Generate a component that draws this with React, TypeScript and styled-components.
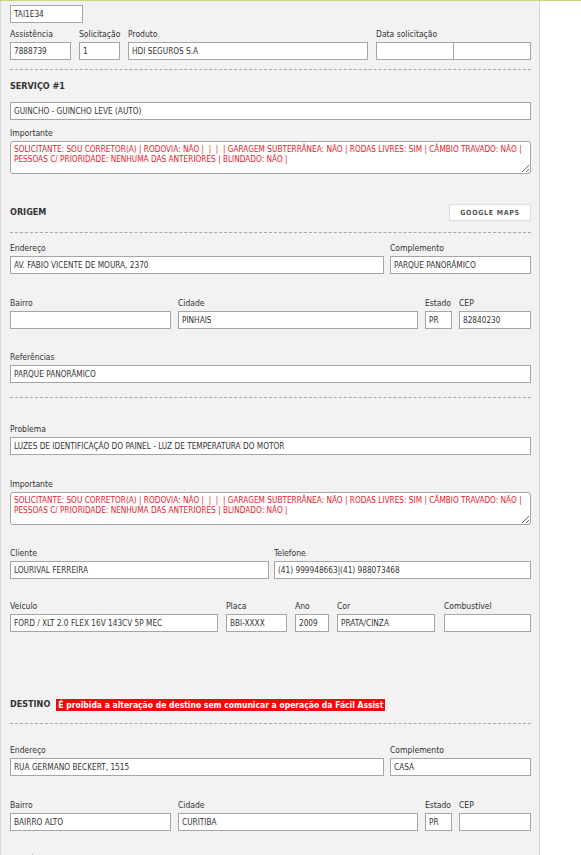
import React from 'react';
import styled, { createGlobalStyle } from 'styled-components';

const GlobalStyle = createGlobalStyle`
	html, body {
		margin: 0;
		padding: 0;
		background: #ffffff;
	}
	body {
		font-family: "DejaVu Sans Condensed", "DejaVu Sans", Verdana, sans-serif;
		color: #333333;
	}
`;

const Page = styled.div`
	border-top: 1px solid #d2d27a;
	min-height: 854px;
`;

const Panel = styled.div`
	width: 540px;
	min-height: 854px;
	box-sizing: border-box;
	background: #f2f2f2;
	border-left: 1px solid #d9d9d9;
	border-right: 1px solid #d9d9d9;
	padding: 0 8px 0 9px;
	display: flex;
	flex-direction: column;
`;

const Row = styled.div<{ $mt: number; $gap?: number }>`
	display: flex;
	align-items: flex-end;
	gap: ${(p) => p.$gap ?? 0}px;
	margin-top: ${(p) => p.$mt}px;
`;

const Field = styled.div<{ $w?: number; $ml?: number }>`
	display: flex;
	flex-direction: column;
	width: ${(p) => (p.$w ? `${p.$w}px` : 'auto')};
	flex: ${(p) => (p.$w ? '0 0 auto' : '1 1 auto')};
	margin-left: ${(p) => p.$ml ?? 0}px;
	min-width: 0;
`;

const Label = styled.label`
	font-size: 8.5px;
	line-height: 15px;
	height: 15px;
	white-space: nowrap;
	color: #333333;
`;

const Input = styled.input`
	height: 18px;
	width: 100%;
	box-sizing: border-box;
	margin: 0;
	border: 1px solid #a5a5a5;
	border-radius: 0;
	background: #ffffff;
	padding: 0 3px;
	font-family: inherit;
	font-size: 8.2px;
	color: #333333;
	outline: none;
`;

const TextArea = styled.textarea`
	height: 33px;
	width: 100%;
	box-sizing: border-box;
	margin: 0;
	border: 1px solid #a5a5a5;
	border-radius: 3px;
	background: #ffffff;
	padding: 2px 3px;
	font-family: inherit;
	font-size: 8.2px;
	line-height: 10px;
	color: #e8202c;
	outline: none;
	resize: vertical;
	display: block;
`;

const Divider = styled.div<{ $mt: number }>`
	margin-top: ${(p) => p.$mt}px;
	border-top: 1px dashed #a8a8a8;
	height: 0;
`;

const SectionHead = styled.div<{ $mt: number }>`
	display: flex;
	align-items: center;
	justify-content: space-between;
	margin-top: ${(p) => p.$mt}px;
	min-height: 13px;
`;

const Title = styled.div`
	display: flex;
	align-items: center;
	gap: 6px;
	font-size: 9px;
	font-weight: bold;
	line-height: 13px;
	color: #333333;
`;

const Warning = styled.span`
	background: #ee0a0a;
	color: #ffffff;
	font-weight: bold;
	font-size: 8.5px;
	line-height: 12px;
	padding: 0 2px;
`;

const MapsButton = styled.button`
	width: 82px;
	height: 17px;
	box-sizing: border-box;
	border: 1px solid #dcdcdc;
	background: #ffffff;
	font-family: inherit;
	font-size: 7px;
	font-weight: bold;
	letter-spacing: 0.7px;
	color: #555555;
	padding: 0;
	cursor: pointer;
`;

const DateInputs = styled.div`
	display: flex;
	> input + input {
		margin-left: -1px;
	}
`;

const importante =
	'SOLICITANTE: SOU CORRETOR(A) | RODOVIA: NÃO |  |  |  | GARAGEM SUBTERRÂNEA: NÃO | RODAS LIVRES: SIM | CÂMBIO TRAVADO: NÃO | PESSOAS C/ PRIORIDADE: NENHUMA DAS ANTERIORES | BLINDADO: NÃO |';

interface AddressProps {
	endereco: string;
	complemento: string;
	bairro: string;
	cidade: string;
	estado: string;
	cep: string;
	referencias?: string;
	mtEndereco: number;
}

function Address(props: AddressProps) {
	return (
		<>
			<Row $mt={props.mtEndereco} $gap={6}>
				<Field $w={374}>
					<Label>Endereço</Label>
					<Input readOnly value={props.endereco} />
				</Field>
				<Field>
					<Label>Complemento</Label>
					<Input readOnly value={props.complemento} />
				</Field>
			</Row>
			<Row $mt={22} $gap={7}>
				<Field $w={161}>
					<Label>Bairro</Label>
					<Input readOnly value={props.bairro} />
				</Field>
				<Field $w={240}>
					<Label>Cidade</Label>
					<Input readOnly value={props.cidade} />
				</Field>
				<Field $w={27}>
					<Label>Estado</Label>
					<Input readOnly value={props.estado} />
				</Field>
				<Field>
					<Label>CEP</Label>
					<Input readOnly value={props.cep} />
				</Field>
			</Row>
			{props.referencias !== undefined && (
				<Row $mt={21}>
					<Field>
						<Label>Referências</Label>
						<Input readOnly value={props.referencias} />
					</Field>
				</Row>
			)}
		</>
	);
}

function App() {
	return (
		<>
			<GlobalStyle />
			<Page>
				<Panel>
					<Row $mt={4}>
						<Field $w={73}>
							<Input readOnly value="TAI1E34" />
						</Field>
					</Row>

					<Row $mt={4} $gap={8}>
						<Field $w={61}>
							<Label>Assistência</Label>
							<Input readOnly value="7888739" />
						</Field>
						<Field $w={41}>
							<Label>Solicitação</Label>
							<Input readOnly value="1" />
						</Field>
						<Field $w={240}>
							<Label>Produto</Label>
							<Input readOnly value="HDI SEGUROS S.A" />
						</Field>
						<Field>
							<Label>Data solicitação</Label>
							<DateInputs>
								<Input readOnly value="" />
								<Input readOnly value="" />
							</DateInputs>
						</Field>
					</Row>

					<Divider $mt={9} />

					<SectionHead $mt={10}>
						<Title>SERVIÇO #1</Title>
					</SectionHead>

					<Row $mt={9}>
						<Field>
							<Input readOnly value="GUINCHO - GUINCHO LEVE (AUTO)" />
						</Field>
					</Row>

					<Row $mt={6}>
						<Field>
							<Label>Importante</Label>
							<TextArea readOnly value={importante} />
						</Field>
					</Row>

					<SectionHead $mt={30}>
						<Title>ORIGEM</Title>
						<MapsButton type="button">GOOGLE MAPS</MapsButton>
					</SectionHead>

					<Divider $mt={11} />

					<Address
						mtEndereco={8}
						endereco="AV. FABIO VICENTE DE MOURA, 2370"
						complemento="PARQUE PANORÂMICO"
						bairro=""
						cidade="PINHAIS"
						estado="PR"
						cep="82840230"
						referencias="PARQUE PANORÂMICO"
					/>

					<Divider $mt={14} />

					<Row $mt={24}>
						<Field>
							<Label>Problema</Label>
							<Input
								readOnly
								value="LUZES DE IDENTIFICAÇÃO DO PAINEL - LUZ DE TEMPERATURA DO MOTOR"
							/>
						</Field>
					</Row>

					<Row $mt={22}>
						<Field>
							<Label>Importante</Label>
							<TextArea readOnly value={importante} />
						</Field>
					</Row>

					<Row $mt={21} $gap={5}>
						<Field $w={259}>
							<Label>Cliente</Label>
							<Input readOnly value="LOURIVAL FERREIRA" />
						</Field>
						<Field>
							<Label>Telefone</Label>
							<Input readOnly value="(41) 999948663|(41) 988073468" />
						</Field>
					</Row>

					<Row $mt={20} $gap={8}>
						<Field $w={208}>
							<Label>Veículo</Label>
							<Input readOnly value="FORD / XLT 2.0 FLEX 16V 143CV 5P MEC" />
						</Field>
						<Field $w={61}>
							<Label>Placa</Label>
							<Input readOnly value="BBI-XXXX" />
						</Field>
						<Field $w={34}>
							<Label>Ano</Label>
							<Input readOnly value="2009" />
						</Field>
						<Field $w={98}>
							<Label>Cor</Label>
							<Input readOnly value="PRATA/CINZA" />
						</Field>
						<Field $ml={1}>
							<Label>Combustível</Label>
							<Input readOnly value="" />
						</Field>
					</Row>

					<SectionHead $mt={66}>
						<Title>
							DESTINO
							<Warning>É proibida a alteração de destino sem comunicar a operação da Fácil Assist</Warning>
						</Title>
					</SectionHead>

					<Divider $mt={12} />

					<Address
						mtEndereco={19}
						endereco="RUA GERMANO BECKERT, 1515"
						complemento="CASA"
						bairro="BAIRRO ALTO"
						cidade="CURITIBA"
						estado="PR"
						cep=""
						referencias=""
					/>
				</Panel>
			</Page>
		</>
	);
}

export default App;
